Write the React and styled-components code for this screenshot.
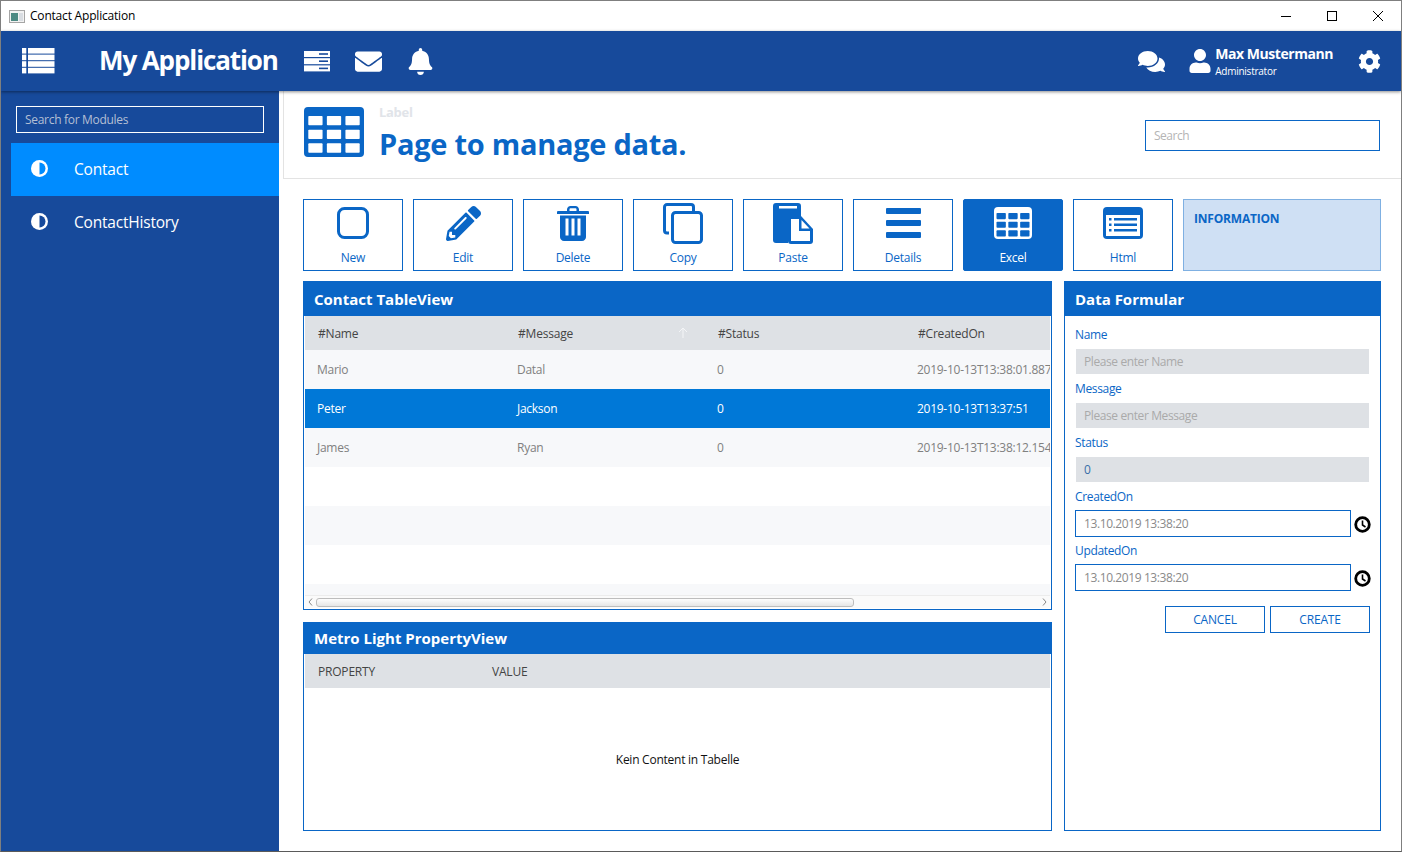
import React from 'react';
import styled, { createGlobalStyle } from 'styled-components';
import { FaEnvelope, FaBell, FaComments, FaUser, FaCog, FaPencilAlt } from 'react-icons/fa';

const BLUE = '#0a66c6';
const NAVY = '#174a9b';
const FONT = '"Open Sans", "Noto Sans", sans-serif';

const Global = createGlobalStyle`
  html, body { margin: 0; padding: 0; background: #fff; }
  body { font-family: ${FONT}; font-size: 12px; overflow: hidden; }
  * { box-sizing: border-box; }
`;

const Window = styled.div`
  width: 1402px;
  height: 852px;
  display: flex;
  flex-direction: column;
  border: 1px solid #7f7f7f;
  border-bottom-color: #5a5a5a;
  overflow: hidden;
  background: #fff;
`;

const TitleBar = styled.div`
  height: 30px;
  flex: none;
  display: flex;
  align-items: center;
  padding-left: 8px;
  background: #fff;
`;
const TitleText = styled.span`
  margin-left: 5px;
  margin-top: -1px;
  font-size: 12px;
  letter-spacing: -0.2px;
  color: #000;
`;
const WinButtons = styled.div`
  margin-left: auto;
  display: flex;
`;
const WinButton = styled.div`
  width: 46px;
  height: 30px;
  display: flex;
  align-items: center;
  justify-content: center;
`;

const Header = styled.header`
  height: 60px;
  flex: none;
  display: flex;
  align-items: center;
  background: ${NAVY};
  color: #fff;
  padding-left: 21px;
  padding-right: 20px;
  position: relative;
  z-index: 2;
  box-shadow: 0 1px 3px rgba(0, 0, 0, 0.45);
`;
const AppTitle = styled.div`
  margin-left: 44px;
  margin-top: -2px;
  font-size: 26px;
  font-weight: 700;
  letter-spacing: -1.1px;
  white-space: nowrap;
  width: 205px;
`;
const HeaderIcons = styled.div`
  display: flex;
  align-items: center;
  gap: 25px;
`;
const HeaderRight = styled.div`
  margin-left: auto;
  display: flex;
  align-items: center;
`;
const UserBox = styled.div`
  display: flex;
  align-items: center;
  margin-left: 23px;
  margin-right: 25px;
`;
const UserText = styled.div`
  margin-left: 3px;
  display: flex;
  flex-direction: column;
  padding-top: 1px;
`;
const UserName = styled.span`
  font-size: 14px;
  font-weight: 700;
  letter-spacing: -0.45px;
  line-height: 18px;
`;
const UserRole = styled.span`
  font-size: 10px;
  letter-spacing: -0.25px;
  line-height: 16px;
`;

const Body = styled.div`
  flex: 1;
  display: flex;
  min-height: 0;
`;

const Sidebar = styled.aside`
  width: 278px;
  flex: none;
  background: ${NAVY};
  padding-top: 15px;
`;
const ModuleSearch = styled.input`
  display: block;
  width: 248px;
  height: 27px;
  margin: 0 0 10px 15px;
  padding: 0 8px;
  background: transparent;
  border: 1px solid #fff;
  border-radius: 0;
  outline: none;
  font: 12px ${FONT};
  letter-spacing: -0.3px;
  color: #fff;
  &::placeholder { color: #b4bfd4; opacity: 1; }
`;
const NavItem = styled.div`
  height: 53px;
  margin-left: 10px;
  display: flex;
  align-items: center;
  padding: 0 0 2px 20px;
  background: ${p => (p.$active ? '#008cff' : 'transparent')};
  color: #fff;
  font-size: 15.5px;
  letter-spacing: -0.2px;
`;
const NavLabel = styled.span`
  margin-left: 26px;
`;

const Main = styled.main`
  flex: 1;
  min-width: 0;
  display: flex;
  flex-direction: column;
`;
const PageHead = styled.div`
  height: 88px;
  flex: none;
  margin-left: 4px;
  display: flex;
  align-items: flex-start;
  padding: 16px 21px 0 20px;
  border-left: 1px solid #e3e3e3;
  border-bottom: 1px solid #e3e3e3;
`;
const HeadText = styled.div`
  margin: -4px 0 0 15px;
  display: flex;
  flex-direction: column;
`;
const HeadLabel = styled.span`
  font-size: 13px;
  font-weight: 700;
  line-height: 18px;
  letter-spacing: -0.3px;
  color: #e1e4e9;
`;
const HeadTitle = styled.span`
  margin-top: 4px;
  font-size: 29px;
  font-weight: 700;
  line-height: 38px;
  letter-spacing: -0.27px;
  color: ${BLUE};
`;
const PageSearch = styled.input`
  margin: 13px 0 0 auto;
  width: 235px;
  height: 31px;
  padding: 0 8px;
  border: 1px solid ${BLUE};
  border-radius: 0;
  outline: none;
  font: 12px ${FONT};
  letter-spacing: -0.5px;
  &::placeholder { color: #b5b5b5; opacity: 1; }
`;

const Work = styled.div`
  flex: 1;
  min-height: 0;
  display: flex;
  flex-direction: column;
  padding: 20px 20px 20px 24px;
  gap: 10px;
`;
const Toolbar = styled.div`
  height: 72px;
  flex: none;
  display: flex;
  gap: 10px;
`;
const ToolButton = styled.div`
  width: 100px;
  height: 72px;
  display: flex;
  flex-direction: column;
  align-items: center;
  border: 1px solid ${BLUE};
  border-radius: ${p => (p.$active ? '2px' : '0')};
  background: ${p => (p.$active ? BLUE : '#fff')};
  color: ${p => (p.$active ? '#fff' : BLUE)};
`;
const ToolIcon = styled.div`
  height: 46px;
  flex: none;
  display: flex;
  align-items: center;
  justify-content: center;
`;
const ToolLabel = styled.span`
  font-size: 12px;
  letter-spacing: -0.25px;
  line-height: 20px;
  margin-top: 2px;
`;
const InfoBox = styled.div`
  flex: 1;
  background: #cfe0f4;
  border: 1px solid #7fb0e2;
  padding: 10px;
  font-size: 12px;
  font-weight: 700;
  letter-spacing: -0.2px;
  color: ${BLUE};
`;

const Panels = styled.div`
  flex: 1;
  min-height: 0;
  display: grid;
  grid-template-columns: 749px 317px;
  column-gap: 12px;
`;
const LeftColumn = styled.div`
  display: grid;
  grid-template-rows: 329px 209px;
  row-gap: 12px;
`;
const Panel = styled.section`
  display: flex;
  flex-direction: column;
  min-height: 0;
  border: 1px solid ${BLUE};
  overflow: hidden;
`;
const PanelTitle = styled.div`
  height: ${p => p.$h || 35}px;
  flex: none;
  margin: -1px -1px 0;
  padding: 0 11px;
  display: flex;
  align-items: center;
  background: ${BLUE};
  color: #fff;
  font-size: 15px;
  font-weight: 700;
  letter-spacing: 0;
`;

const HeadRow = styled.div`
  height: 34px;
  flex: none;
  display: flex;
  align-items: center;
  background: #dee1e5;
  margin: 0 1px;
  color: #444;
  font-size: 12px;
  letter-spacing: -0.2px;
  white-space: nowrap;
`;
const Row = styled.div`
  height: ${p => p.$h || 39}px;
  flex: none;
  display: flex;
  align-items: center;
  margin: 0 1px;
  background: ${p => (p.$selected ? '#0078d7' : p.$alt ? '#f7f8fa' : '#fff')};
  color: ${p => (p.$selected ? '#fff' : '#808080')};
  font-size: 12px;
  letter-spacing: -0.27px;
  white-space: nowrap;
  overflow: hidden;
`;
const Cell = styled.div`
  flex: none;
  width: 200px;
  padding-left: ${p => p.$pad}px;
  position: relative;
`;
const SortArrow = styled.span`
  position: absolute;
  left: 173px;
  top: 2px;
  display: flex;
`;
const ScrollBar = styled.div`
  height: 13px;
  flex: none;
  margin: 0 1px;
  display: flex;
  align-items: center;
  justify-content: space-between;
  padding: 0 3px;
  background: #fafafa;
  border-top: 1px solid #ececec;
`;
const ScrollThumb = styled.div`
  width: 538px;
  height: 9px;
  margin-left: 3px;
  margin-right: auto;
  border: 1px solid #bdbdbd;
  border-radius: 3px;
  background: linear-gradient(#fdfdfd, #e6e6e6);
`;
const PropColumn = styled.div`
  flex: none;
  width: ${p => p.$w}px;
  padding-left: 13px;
`;
const Empty = styled.div`
  flex: 1;
  display: flex;
  align-items: center;
  justify-content: center;
  color: #111;
  font-size: 12px;
  letter-spacing: -0.25px;
`;

const Form = styled.div`
  padding: 10px 10px 0 10px;
  display: flex;
  flex-direction: column;
`;
const FieldLabel = styled.label`
  height: 18px;
  display: flex;
  align-items: center;
  padding-bottom: 2px;
  color: ${BLUE};
  font-size: 12px;
  letter-spacing: -0.35px;
  margin-bottom: ${p => (p.$dense ? 4 : 5)}px;
`;
const GreyInput = styled.input`
  display: block;
  width: 293px;
  height: 25px;
  margin-left: 1px;
  margin-bottom: 6px;
  padding: 0 8px;
  border: none;
  border-radius: 0;
  outline: none;
  background: #dee1e5;
  font: 12px ${FONT};
  letter-spacing: -0.4px;
  color: #3a6ea8;
  &::placeholder { color: #aaa; opacity: 1; }
`;
const DateRow = styled.div`
  display: flex;
  align-items: center;
  height: 27px;
  margin-bottom: 5px;
`;
const DateInput = styled.input`
  flex: none;
  width: 276px;
  height: 27px;
  padding: 0 8px;
  border: 1px solid ${BLUE};
  border-radius: 0;
  outline: none;
  background: #fff;
  font: 12px ${FONT};
  letter-spacing: -0.4px;
  color: #8a8a8a;
`;
const ClockWrap = styled.span`
  flex: none;
  display: flex;
  margin: 1px 0 0 3px;
`;
const FormButtons = styled.div`
  display: flex;
  justify-content: flex-end;
  gap: 5px;
  margin-top: 10px;
`;
const FormButton = styled.div`
  width: 100px;
  height: 27px;
  display: flex;
  align-items: center;
  justify-content: center;
  border: 1px solid ${BLUE};
  color: ${BLUE};
  font-size: 12px;
  letter-spacing: -0.2px;
`;

const ThList = () => (
  <svg width="33" height="26" viewBox="0 0 33 26" fill="#fff">
    {[0, 6.6, 13.2, 19.8].map(y => (
      <g key={y}>
        <rect x="0" y={y} width="4.3" height="5.6" />
        <rect x="6" y={y} width="26.5" height="5.6" />
      </g>
    ))}
  </svg>
);

const Server = () => (
  <svg width="26" height="21" viewBox="0 0 26 21">
    {[0, 7.2, 14.4].map(y => (
      <g key={y}>
        <rect x="0" y={y} width="26" height="6" fill="#fff" />
        <rect x="15" y={y + 2.2} width="9" height="1.6" fill={NAVY} />
      </g>
    ))}
  </svg>
);

const TableIcon = ({ w, h, bg, fg, top, gap }) => {
  const cw = (w - gap * 4) / 3;
  const ch = (h - top - gap * 3) / 3;
  return (
    <svg width={w} height={h} viewBox={`0 0 ${w} ${h}`}>
      <rect width={w} height={h} rx="4" fill={bg} />
      {[0, 1, 2].map(r =>
        [0, 1, 2].map(c => (
          <rect
            key={`${r}${c}`}
            x={gap + c * (cw + gap)}
            y={top + r * (ch + gap)}
            width={cw}
            height={ch}
            rx="0.8"
            fill={fg}
          />
        ))
      )}
    </svg>
  );
};

const SquareIcon = () => (
  <svg width="32" height="32" viewBox="0 0 32 32" fill="none">
    <rect x="1.5" y="1.5" width="29" height="29" rx="6" stroke={BLUE} strokeWidth="3" />
  </svg>
);

const TrashIcon = () => (
  <svg width="32" height="35" viewBox="0 0 32 35" fill={BLUE}>
    <path d="M10 5V3.5C10 1.6 11.6 0 13.5 0h5C20.4 0 22 1.6 22 3.5V5h9a1 1 0 0 1 1 1v2H0V6a1 1 0 0 1 1-1zM12.5 5h7V3.2c0-.5-.4-.9-.9-.9h-5.2c-.5 0-.9.4-.9.9z" />
    <path d="M3 9.5h26V31c0 2.2-1.8 4-4 4H7c-2.2 0-4-1.8-4-4z" />
    <rect x="8.5" y="12.5" width="3" height="17" fill="#fff" />
    <rect x="14.5" y="12.5" width="3" height="17" fill="#fff" />
    <rect x="20.5" y="12.5" width="3" height="17" fill="#fff" />
  </svg>
);

const CopyIcon = () => (
  <svg width="40" height="41" viewBox="0 0 40 41" fill="none" stroke={BLUE} strokeWidth="3">
    <path d="M6 30H4a2.5 2.5 0 0 1-2.5-2.5V4A2.5 2.5 0 0 1 4 1.5h24A2.5 2.5 0 0 1 30.5 4v4" />
    <rect x="9.5" y="9.5" width="29" height="30" rx="3" />
  </svg>
);

const PasteIcon = () => (
  <svg width="40" height="41" viewBox="0 0 40 41">
    <path d="M3 0h22a3 3 0 0 1 3 3v10H15v27H3a3 3 0 0 1-3-3V3a3 3 0 0 1 3-3z" fill={BLUE} />
    <rect x="6" y="3" width="18" height="2.5" fill="#fff" />
    <path d="M15 13h13l12 13v12a3 3 0 0 1-3 3H18a3 3 0 0 1-3-3z" fill={BLUE} />
    <path d="M18 16h8v12h11v10H18z" fill="#fff" />
    <path d="M28.5 17 36.5 25.5H28.5z" fill="#fff" />
  </svg>
);

const BarsIcon = () => (
  <svg width="35" height="30" viewBox="0 0 35 30" fill={BLUE}>
    <rect y="0" width="35" height="6" rx="1" />
    <rect y="12" width="35" height="6" rx="1" />
    <rect y="24" width="35" height="6" rx="1" />
  </svg>
);

const HtmlIcon = () => (
  <svg width="40" height="32" viewBox="0 0 40 32">
    <rect width="40" height="32" rx="4" fill={BLUE} />
    <rect x="3" y="8" width="34" height="21" fill="#fff" />
    {[11, 16.5, 22].map(y => (
      <g key={y} fill={BLUE}>
        <rect x="6" y={y} width="2.5" height="2.5" />
        <rect x="11" y={y} width="23" height="2.5" />
      </g>
    ))}
  </svg>
);

const Adjust = ({ bg }) => (
  <svg width="17" height="17" viewBox="0 0 17 17">
    <circle cx="8.5" cy="8.5" r="8.5" fill="#fff" />
    <path d="M8.5 2.5a6 6 0 0 1 0 12z" fill={bg} />
  </svg>
);

const Clock = () => (
  <svg width="17" height="17" viewBox="0 0 17 17" fill="none" stroke="#000">
    <circle cx="8.5" cy="8.5" r="6.8" strokeWidth="2.8" />
    <path d="M8.5 4.5v4.5l3 2" strokeWidth="1.6" />
  </svg>
);

const AppGlyph = () => (
  <svg width="16" height="13" viewBox="0 0 16 13">
    <rect x="0.5" y="0.5" width="15" height="12" fill="#f2f2f2" stroke="#a5a5a5" />
    <rect x="2" y="3" width="7" height="8" fill="#4d8a83" />
    <rect x="10" y="3" width="4" height="8" fill="#d9dde2" />
  </svg>
);

const tools = [
  ['New', <SquareIcon />],
  ['Edit', <FaPencilAlt size={35} color={BLUE} />],
  ['Delete', <TrashIcon />],
  ['Copy', <CopyIcon />],
  ['Paste', <PasteIcon />],
  ['Details', <BarsIcon />],
  ['Excel', <TableIcon w={38} h={32} bg="#fff" fg={BLUE} top={6} gap={2.5} />, true],
  ['Html', <HtmlIcon />],
];

const rows = [
  { name: 'Mario', message: 'Datal', status: '0', created: '2019-10-13T13:38:01.887', alt: true },
  { name: 'Peter', message: 'Jackson', status: '0', created: '2019-10-13T13:37:51', selected: true },
  { name: 'James', message: 'Ryan', status: '0', created: '2019-10-13T13:38:12.154', alt: true },
];

const App = () => (
  <Window>
    <Global />
    <TitleBar>
      <AppGlyph />
      <TitleText>Contact Application</TitleText>
      <WinButtons>
        <WinButton>
          <svg width="10" height="10" viewBox="0 0 10 10"><rect y="5" width="10" height="1" fill="#000" /></svg>
        </WinButton>
        <WinButton>
          <svg width="10" height="10" viewBox="0 0 10 10" fill="none"><rect x="0.5" y="0.5" width="9" height="9" stroke="#000" /></svg>
        </WinButton>
        <WinButton>
          <svg width="10" height="10" viewBox="0 0 10 10" stroke="#000" strokeWidth="1"><path d="M0 0l10 10M10 0L0 10" /></svg>
        </WinButton>
      </WinButtons>
    </TitleBar>
    <Header>
      <ThList />
      <AppTitle>My Application</AppTitle>
      <HeaderIcons>
        <Server />
        <FaEnvelope size={27} />
        <FaBell size={27} />
      </HeaderIcons>
      <HeaderRight>
        <FaComments size={27} />
        <UserBox>
          <FaUser size={24} />
          <UserText>
            <UserName>Max Mustermann</UserName>
            <UserRole>Administrator</UserRole>
          </UserText>
        </UserBox>
        <FaCog size={23} />
      </HeaderRight>
    </Header>
    <Body>
      <Sidebar>
        <ModuleSearch placeholder="Search for Modules" />
        <NavItem $active>
          <Adjust bg="#008cff" />
          <NavLabel>Contact</NavLabel>
        </NavItem>
        <NavItem>
          <Adjust bg={NAVY} />
          <NavLabel>ContactHistory</NavLabel>
        </NavItem>
      </Sidebar>
      <Main>
        <PageHead>
          <TableIcon w={60} h={50} bg={BLUE} fg="#fff" top={9} gap={4.3} />
          <HeadText>
            <HeadLabel>Label</HeadLabel>
            <HeadTitle>Page to manage data.</HeadTitle>
          </HeadText>
          <PageSearch placeholder="Search" />
        </PageHead>
        <Work>
          <Toolbar>
            {tools.map(([label, icon, active]) => (
              <ToolButton key={label} $active={active}>
                <ToolIcon>{icon}</ToolIcon>
                <ToolLabel>{label}</ToolLabel>
              </ToolButton>
            ))}
            <InfoBox>INFORMATION</InfoBox>
          </Toolbar>
          <Panels>
            <LeftColumn>
              <Panel>
                <PanelTitle>Contact TableView</PanelTitle>
                <HeadRow>
                  <Cell $pad={13}>#Name</Cell>
                  <Cell $pad={13}>
                    #Message
                    <SortArrow>
                      <svg width="10" height="11" viewBox="0 0 10 11" fill="none" stroke="#f4f5f7" strokeWidth="1"><path d="M5 11V1M1 5l4-4 4 4" /></svg>
                    </SortArrow>
                  </Cell>
                  <Cell $pad={13}>#Status</Cell>
                  <Cell $pad={13}>#CreatedOn</Cell>
                </HeadRow>
                {rows.map(r => (
                  <Row key={r.name} $alt={r.alt} $selected={r.selected}>
                    <Cell $pad={12}>{r.name}</Cell>
                    <Cell $pad={12}>{r.message}</Cell>
                    <Cell $pad={12}>{r.status}</Cell>
                    <Cell $pad={12}>{r.created}</Cell>
                  </Row>
                ))}
                <Row />
                <Row $alt />
                <Row />
                <Row $alt $h={11} />
                <ScrollBar>
                  <svg width="5" height="8" viewBox="0 0 5 8" fill="none" stroke="#888"><path d="M4 0.5 1 4l3 3.5" /></svg>
                  <ScrollThumb />
                  <svg width="5" height="8" viewBox="0 0 5 8" fill="none" stroke="#888"><path d="M1 0.5 4 4 1 7.5" /></svg>
                </ScrollBar>
              </Panel>
              <Panel>
                <PanelTitle $h={32}>Metro Light PropertyView</PanelTitle>
                <HeadRow>
                  <PropColumn $w={174}>PROPERTY</PropColumn>
                  <PropColumn $w={200}>VALUE</PropColumn>
                </HeadRow>
                <Empty>Kein Content in Tabelle</Empty>
              </Panel>
            </LeftColumn>
            <Panel>
              <PanelTitle>Data Formular</PanelTitle>
              <Form>
                <FieldLabel>Name</FieldLabel>
                <GreyInput placeholder="Please enter Name" />
                <FieldLabel>Message</FieldLabel>
                <GreyInput placeholder="Please enter Message" />
                <FieldLabel>Status</FieldLabel>
                <GreyInput defaultValue="0" />
                <FieldLabel $dense>CreatedOn</FieldLabel>
                <DateRow>
                  <DateInput defaultValue="13.10.2019 13:38:20" />
                  <ClockWrap><Clock /></ClockWrap>
                </DateRow>
                <FieldLabel $dense>UpdatedOn</FieldLabel>
                <DateRow>
                  <DateInput defaultValue="13.10.2019 13:38:20" />
                  <ClockWrap><Clock /></ClockWrap>
                </DateRow>
                <FormButtons>
                  <FormButton>CANCEL</FormButton>
                  <FormButton>CREATE</FormButton>
                </FormButtons>
              </Form>
            </Panel>
          </Panels>
        </Work>
      </Main>
    </Body>
  </Window>
);

export default App;
